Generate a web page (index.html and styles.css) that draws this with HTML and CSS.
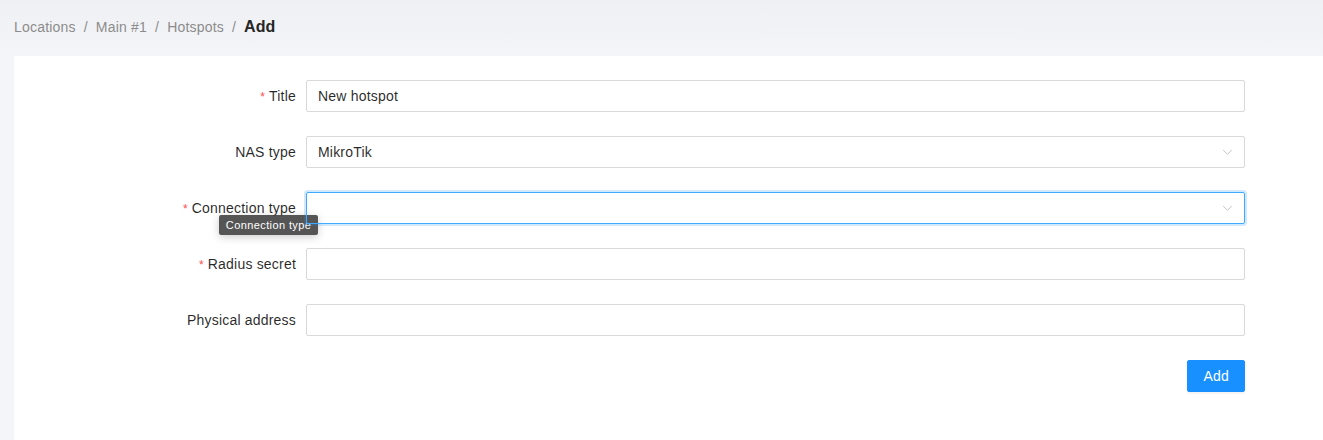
FILE: index.html
```html
<!DOCTYPE html>
<html>
<head>
<meta charset="utf-8">
<link rel="stylesheet" href="styles.css">
</head>
<body>
<div class="page">
  <nav class="breadcrumb">
    <span class="crumb">Locations</span><span class="sep">/</span>
    <span class="crumb">Main #1</span><span class="sep">/</span>
    <span class="crumb">Hotspots</span><span class="sep">/</span>
    <span class="current">Add</span>
  </nav>
  <main class="card">
    <form class="form">
      <div class="row">
        <label class="label"><span class="req">*</span>Title</label>
        <div class="control"><div class="input">New hotspot</div></div>
      </div>
      <div class="row">
        <label class="label">NAS type</label>
        <div class="control"><div class="input select">MikroTik<svg class="chev" viewBox="0 0 12 8" width="11" height="7"><path d="M1 1l5 5 5-5" fill="none" stroke="#bfbfbf" stroke-width="1.1"/></svg></div></div>
      </div>
      <div class="row">
        <label class="label"><span class="req">*</span><span class="tip-host">Connection type<span class="tooltip">Connection type</span></span></label>
        <div class="control"><div class="input select focused"><svg class="chev" viewBox="0 0 12 8" width="11" height="7"><path d="M1 1l5 5 5-5" fill="none" stroke="#bfbfbf" stroke-width="1.1"/></svg></div></div>
      </div>
      <div class="row">
        <label class="label"><span class="req">*</span>Radius secret</label>
        <div class="control"><div class="input"></div></div>
      </div>
      <div class="row">
        <label class="label">Physical address</label>
        <div class="control"><div class="input"></div></div>
      </div>
      <div class="actions">
        <button type="button" class="btn">Add</button>
      </div>
    </form>
  </main>
</div>
</body>
</html>
```
FILE: styles.css
```css
* { box-sizing: border-box; }
html, body { margin: 0; height: 100%; }
body {
  font-family: "Liberation Sans", Arial, sans-serif;
  font-size: 14px;
  letter-spacing: 0.2px;
  color: rgba(0,0,0,0.85);
  background: #f2f3f6;
}
.page {
  min-height: 100%;
  display: flex;
  flex-direction: column;
  background: linear-gradient(to bottom, #eff0f3 0px, #f4f5f8 56px, #f4f5f8 100%);
}
.breadcrumb {
  height: 56px;
  display: flex;
  align-items: center;
  padding: 0 14px 2px;
}
.crumb { color: #8c8c8c; font-size: 14px; }
.sep { color: #8c8c8c; margin: 0 8px; }
.current { font-size: 16px; font-weight: bold; color: #262626; letter-spacing: 0; }
.card {
  flex: 1;
  margin-left: 14px;
  background: #fff;
  padding: 24px 78px 40px 0;
}
.form { display: flex; flex-direction: column; }
.row {
  display: flex;
  align-items: center;
  height: 32px;
  margin-bottom: 24px;
}
.label {
  width: 292px;
  flex: none;
  text-align: right;
  padding-right: 10px;
  color: rgba(0,0,0,0.85);
  white-space: nowrap;
}
.req {
  color: #ff4d4f;
  font-size: 12px;
  margin-right: 4px;
}
.control { flex: 1; }
.input {
  height: 32px;
  border: 1px solid #d9d9d9;
  border-radius: 2px;
  padding: 0 11px;
  display: flex;
  align-items: center;
  color: rgba(0,0,0,0.85);
  position: relative;
}
.select .chev {
  position: absolute;
  right: 11px;
  top: 12px;
}
.focused {
  border-color: #40a9ff;
  box-shadow: 0 0 0 2px rgba(24,144,255,0.2);
}
.tip-host { position: relative; }
.tooltip {
  position: absolute;
  left: 27px;
  top: 15px;
  background: rgba(70,70,70,0.92);
  color: #fff;
  font-size: 11px;
  letter-spacing: 0.4px;
  line-height: 20px;
  padding: 0 7px;
  border-radius: 2px;
  box-shadow: 0 2px 8px rgba(0,0,0,0.2);
  text-align: left;
}
.actions {
  display: flex;
  justify-content: flex-end;
}
.btn {
  height: 32px;
  padding: 0 15px;
  background: #1890ff;
  border: 1px solid #1890ff;
  border-radius: 2px;
  color: #fff;
  font-family: inherit;
  font-size: 14px;
  letter-spacing: 0.2px;
  box-shadow: 0 2px 0 rgba(0,0,0,0.045);
}
```
